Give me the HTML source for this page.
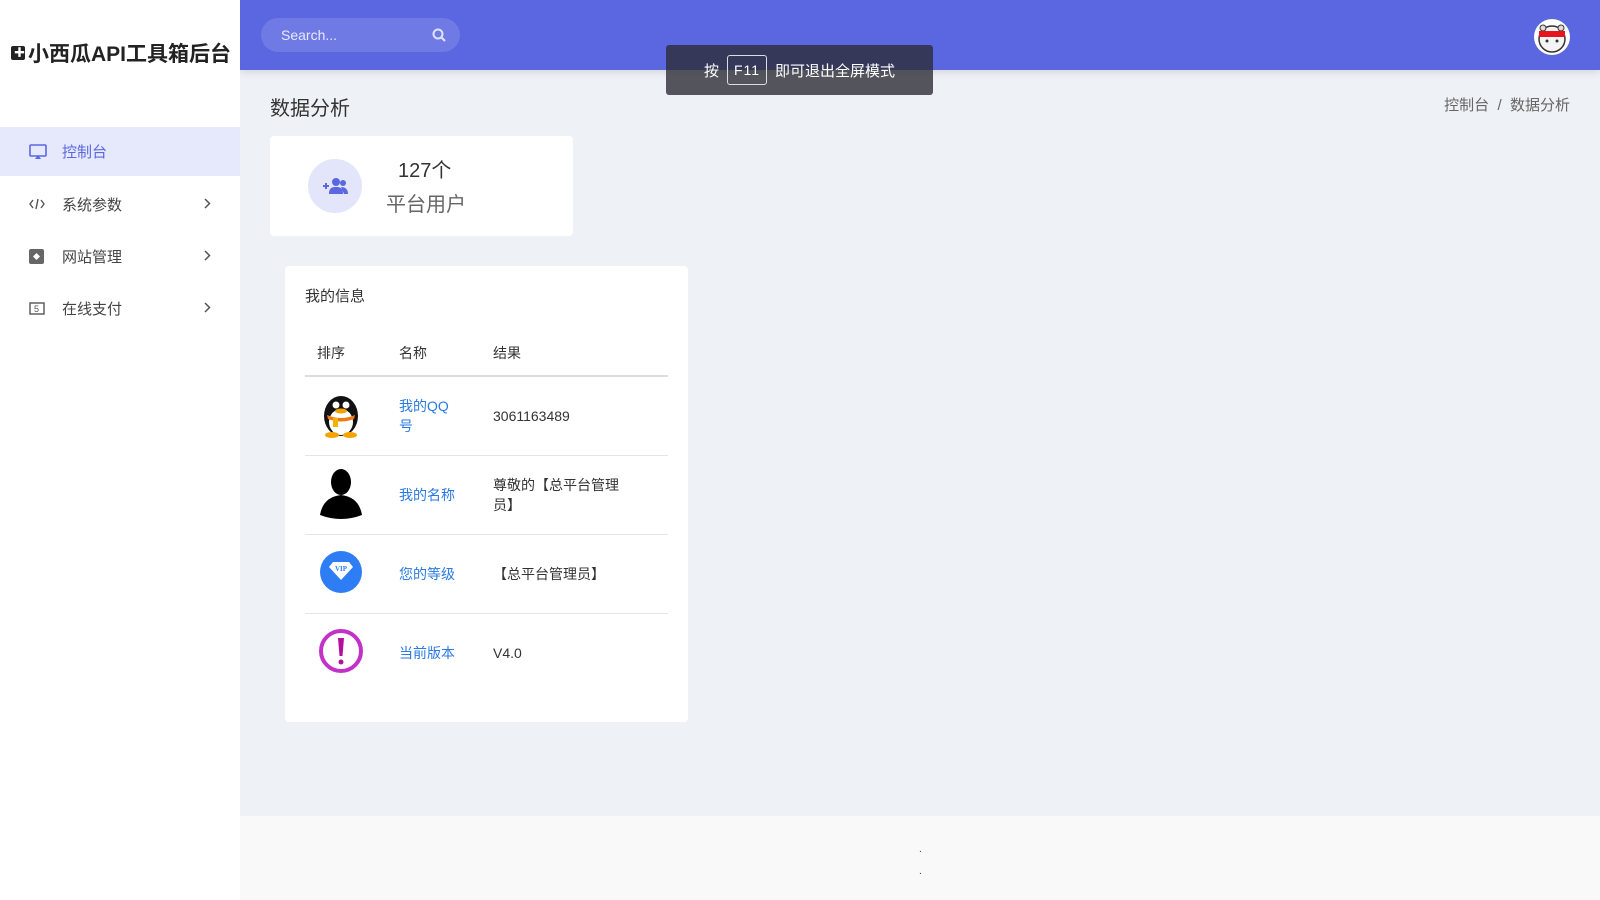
<!DOCTYPE html>
<html><head><meta charset="utf-8"><style>
*{margin:0;padding:0;box-sizing:border-box}
body{width:1600px;height:900px;overflow:hidden;background:#eef1f5;font-family:"Liberation Sans","Noto Sans CJK SC",sans-serif;position:relative;color:#333}
.side{position:absolute;left:0;top:0;width:240px;height:900px;background:#fff;z-index:2}
.logo{position:absolute;left:11px;top:38px;font-size:21px;font-weight:bold;color:#222;white-space:nowrap}
.menu{position:absolute;top:127px;left:0;width:240px}
.mi{height:52px;display:flex;align-items:center;font-size:15px;color:#444;position:relative}
.mi.act{background:#e6e9fc;color:#5a67e0;height:49px;margin-bottom:2px}
.mi svg{position:absolute;left:29px}
.mi span{position:absolute;left:62px}
.mi .ch{position:absolute;left:203px;top:20px}
.hdr{position:absolute;left:240px;top:0;right:0;height:70px;background:#5a67e0;box-shadow:0 2px 8px rgba(0,0,0,.12)}
.search{position:absolute;left:21px;top:18px;width:199px;height:34px;border-radius:17px;background:rgba(255,255,255,.13);color:#e8eaff;font-size:14px;line-height:34px;padding-left:20px}
.search svg{position:absolute;right:14px;top:10px}
.av{position:absolute;left:1294px;top:19px;width:36px;height:36px;border-radius:50%;background:#fff;overflow:hidden}
.title{position:absolute;left:270px;top:92px;font-size:20px;color:#333}
.bc{position:absolute;right:30px;top:94px;font-size:15px;color:#666}
.card{position:absolute;background:#fff;border-radius:4px}
.toast{position:absolute;left:666px;top:45px;width:267px;height:50px;background:rgba(45,45,55,.8);border-radius:3px;color:#fff;font-size:15px;display:flex;align-items:center;justify-content:center;gap:8px;z-index:5}
.toast b{font-weight:normal;border:1px solid #ddd;border-radius:3px;padding:6px 6px;font-size:14px;letter-spacing:1px}
table{border-collapse:collapse;width:363px;position:absolute;left:20px;top:58px;font-size:14px}
th{text-align:left;font-weight:normal;height:52px;padding-top:6px;border-bottom:2px solid #ddd;color:#333}
td{height:79px;border-bottom:1px solid #e5e5e5;vertical-align:middle}
td a{color:#2a7ae2;text-decoration:none}
.footer{position:absolute;left:240px;top:816px;right:0;bottom:0;background:#f9f9f9}
</style></head><body>
<div class="side">
<div class="logo"><span style="display:inline-block;width:14px;height:14px;background:#222;border-radius:2px;vertical-align:1px;position:relative;margin-right:3px"><span style="position:absolute;left:3px;top:2px;color:#fff;font-size:11px;line-height:10px">✚</span></span>小西瓜API工具箱后台</div>
<div class="menu">
<div class="mi act"><svg width="18" height="16" viewBox="0 0 18 16"><rect x="1" y="1" width="16" height="11" rx="1" fill="none" stroke="#5a67e0" stroke-width="1.6"/><path d="M6 15 L9 11 L12 15Z" fill="#5a67e0"/></svg><span>控制台</span></div>
<div class="mi"><svg width="16" height="14" viewBox="0 0 16 14"><path d="M4 3L1 7L4 11M12 3L15 7L12 11M9 2L7 12" fill="none" stroke="#555" stroke-width="1.4"/></svg><span>系统参数</span><svg class="ch" style="left:204px" width="7" height="11" viewBox="0 0 7 11"><path d="M1 1L5.5 5.5L1 10" fill="none" stroke="#555" stroke-width="1.5"/></svg></div>
<div class="mi"><svg width="15" height="15" viewBox="0 0 15 15"><rect width="15" height="15" rx="2" fill="#666"/><path d="M7.5 4L11 7.5L7.5 11L4 7.5Z" fill="#fff"/></svg><span>网站管理</span><svg class="ch" style="left:204px" width="7" height="11" viewBox="0 0 7 11"><path d="M1 1L5.5 5.5L1 10" fill="none" stroke="#555" stroke-width="1.5"/></svg></div>
<div class="mi"><svg width="16" height="13" viewBox="0 0 16 13"><rect x="1" y="1" width="14" height="11" fill="none" stroke="#555" stroke-width="1.4"/><text x="5" y="10" font-size="9" fill="#555" font-family="Liberation Sans">5</text></svg><span>在线支付</span><svg class="ch" style="left:204px" width="7" height="11" viewBox="0 0 7 11"><path d="M1 1L5.5 5.5L1 10" fill="none" stroke="#555" stroke-width="1.5"/></svg></div>
</div>
</div>
<div class="hdr">
<div class="search">Search...<svg width="14" height="14" viewBox="0 0 14 14"><circle cx="6" cy="6" r="4.5" fill="none" stroke="#dfe2ff" stroke-width="2"/><path d="M9.5 9.5L13 13" stroke="#dfe2ff" stroke-width="2.2"/></svg></div>
<div class="av"><svg width="36" height="36" viewBox="0 0 36 36"><circle cx="18" cy="20" r="13" fill="#f4f4f4" stroke="#333" stroke-width="1.5"/><circle cx="9" cy="9" r="3" fill="#ddd" stroke="#333"/><circle cx="27" cy="9" r="3" fill="#ddd" stroke="#333"/><rect x="5" y="12" width="26" height="6" fill="#e8141b"/><circle cx="13" cy="22" r="1.5" fill="#333"/><circle cx="23" cy="22" r="1.5" fill="#333"/></svg></div>
</div>
<div class="toast">按 <b>F11</b> 即可退出全屏模式</div>
<div class="title">数据分析</div>
<div class="bc">控制台 &nbsp;/&nbsp; 数据分析</div>
<div class="card" style="left:270px;top:136px;width:303px;height:100px">
<div style="position:absolute;left:38px;top:23px;width:54px;height:54px;border-radius:50%;background:#e3e5fb"><svg style="position:absolute;left:14px;top:18px" width="27" height="18" viewBox="0 0 27 18"><path d="M1 9h6M4 6v6" stroke="#5a67e0" stroke-width="2"/><circle cx="14" cy="5" r="4" fill="#5a67e0"/><circle cx="21" cy="6" r="3" fill="#5a67e0"/><path d="M7 17c0-6 3-7 7-7s7 1 7 7z M19 10c4 0 7 2 7 7h-4z" fill="#5a67e0"/></svg></div>
<div style="position:absolute;left:128px;top:18px;font-size:20px;color:#333">127个</div>
<div style="position:absolute;left:116px;top:52px;font-size:20px;color:#666">平台用户</div>
</div>
<div class="card" style="left:285px;top:266px;width:403px;height:456px">
<div style="position:absolute;left:20px;top:19px;font-size:15px;color:#333">我的信息</div>
<table>
<tr><th style="width:94px;padding-left:12px">排序</th><th style="width:94px">名称</th><th>结果</th></tr>
<tr><td style="padding-left:12px"><svg width="48" height="48" viewBox="0 0 48 48"><ellipse cx="24" cy="26" rx="17" ry="20" fill="#111"/><ellipse cx="24" cy="32" rx="12" ry="13" fill="#fff"/><circle cx="19" cy="15" r="3.5" fill="#fff"/><circle cx="29" cy="15" r="3.5" fill="#fff"/><ellipse cx="24" cy="21" rx="6" ry="2.5" fill="#f5a300"/><path d="M10 25Q24 31 38 25L37 29Q24 34 11 29Z" fill="#f07a12"/><rect x="16" y="28" width="5" height="9" fill="#f5b300"/><ellipse cx="15" cy="45" rx="7" ry="3" fill="#f5a300"/><ellipse cx="33" cy="45" rx="7" ry="3" fill="#f5a300"/></svg></td><td><a>我的QQ<br>号</a></td><td>3061163489</td></tr>
<tr><td style="padding-left:12px"><svg width="48" height="52" viewBox="0 0 48 52"><ellipse cx="24" cy="15" rx="10" ry="13" fill="#000"/><path d="M3 48Q6 30 24 28Q42 30 45 48Q24 56 3 48Z" fill="#000"/></svg></td><td><a>我的名称</a></td><td>尊敬的【总平台管理<br>员】</td></tr>
<tr><td style="padding-left:12px"><svg width="48" height="48" viewBox="0 0 48 48"><circle cx="24" cy="24" r="21" fill="#2f7df5"/><path d="M12 19L16 14H32L36 19L24 32Z" fill="#fff"/><text x="24" y="23" font-size="7" font-weight="bold" text-anchor="middle" fill="#2f7df5" font-family="Liberation Serif">VIP</text></svg></td><td><a>您的等级</a></td><td>【总平台管理员】</td></tr>
<tr><td style="padding-left:12px;border-bottom:none"><svg width="48" height="48" viewBox="0 0 48 48"><circle cx="24" cy="24" r="20" fill="none" stroke="#c232c9" stroke-width="4"/><path d="M21 11h6l-1.5 18h-3z" fill="#b3109e"/><circle cx="24" cy="35" r="2.5" fill="#b3109e"/></svg></td><td style="border-bottom:none"><a>当前版本</a></td><td style="border-bottom:none">V4.0</td></tr>
</table>
</div>
<div class="footer"><div style="position:absolute;left:679px;top:23px;font-size:10px;line-height:22px">.<br>.</div></div>
</body></html>
